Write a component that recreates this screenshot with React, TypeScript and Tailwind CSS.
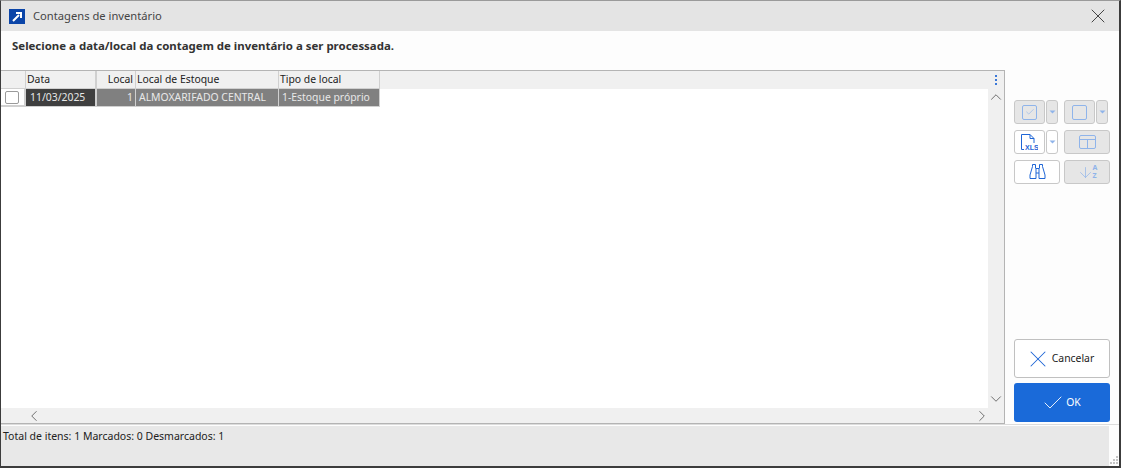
import React from 'react';
import { X, Check, ChevronUp, ChevronDown, ChevronLeft, ChevronRight, ArrowDown } from 'lucide-react';

const Caret = () => (
  <svg width="7" height="4" viewBox="0 0 7 4"><path d="M0.5 0.5h6L3.5 3.5z" fill="#8fb4ea" /></svg>
);

const ToolButton = ({ active, wide, children }: { active?: boolean; wide?: boolean; children?: React.ReactNode }) => (
  <div
    className={`h-[24px] flex items-center justify-center rounded-[3px] border border-[#c8c8c8] ${wide ? 'w-[46px]' : 'w-[31px]'} ${active ? 'bg-white' : 'bg-[#e6e6e6]'}`}
  >
    {children}
  </div>
);

const CaretButton = ({ active }: { active?: boolean }) => (
  <div className={`h-[24px] w-[12px] flex items-center justify-center rounded-[3px] border border-[#c8c8c8] ${active ? 'bg-white' : 'bg-[#e6e6e6]'}`}>
    <Caret />
  </div>
);

export default function App() {
  return (
    <div className="h-[476px] w-[1135px] bg-white font-['Noto_Sans','Liberation_Sans',sans-serif]">
      <div className="flex h-[468px] w-[1121px] flex-col border-t border-r-2 border-b-2 border-l border-t-[#9a9a9a] border-r-[#3c3c3c] border-b-[#3c3c3c] border-l-[#3c3c3c] bg-[#fdfdfd]">
        {/* title bar */}
        <div className="flex h-[30px] shrink-0 items-center bg-[#e4e4e4] pr-[9px] pl-[8px]">
          <div className="flex h-[15px] w-[16px] items-center justify-center bg-[#0b45a8]">
            <svg width="11" height="11" viewBox="0 0 11 11"><path d="M1 10 7 4M4 2h5v5" fill="none" stroke="#fff" strokeWidth="2" /></svg>
          </div>
          <span className="ml-[8px] pt-[1px] text-[11.2px] text-[#444]">Contagens de inventário</span>
          <X className="ml-auto text-[#444]" size={24} strokeWidth={1} />
        </div>

        <p className="mt-[8px] pl-[11px] text-[11.45px] leading-[14px] font-bold whitespace-nowrap text-[#333]">
          Selecione a data/local da contagem de inventário a ser processada.
        </p>

        <div className="mt-[17px] flex min-h-0 flex-1">
          {/* grid */}
          <div className="flex h-[354px] w-[1004px] shrink-0 flex-col border-y border-r border-[#b4b4b4] bg-white">
            <div className="flex h-[18px] shrink-0 bg-[#f0f0f0] text-[10.4px] leading-[16px] whitespace-nowrap text-[#222]">
              <div className="w-[25px] border-r border-b border-[#d0d0d0]" />
              <div className="w-[71px] border-r-2 border-b border-[#d0d0d0] pl-[1px]">Data</div>
              <div className="w-[39px] border-r border-b border-[#d0d0d0] pr-[2px] text-right">Local</div>
              <div className="w-[143px] border-r border-b border-[#d0d0d0] pl-[1px]">Local de Estoque</div>
              <div className="w-[101px] border-r border-b border-[#d0d0d0] pl-[1px]">Tipo de local</div>
              <div className="flex flex-1 items-center justify-end pr-[7px]">
                <svg width="3" height="11" viewBox="0 0 3 11"><path d="M1 0h2v2H1zM1 4h2v2H1zM1 8h2v2H1z" fill="#3b78d8" /></svg>
              </div>
            </div>
            <div className="flex min-h-0 flex-1">
              <div className="flex min-w-0 flex-1 flex-col">
                <div className="flex h-[18px] shrink-0 text-[10.4px] leading-[17px] whitespace-nowrap text-[#e8e8e8]">
                  <div className="flex w-[25px] items-center justify-start border-r-2 border-b-2 border-[#d0d0d0] bg-white pl-[4px]">
                    <div className="h-[13px] w-[14px] rounded-[2px] border border-[#9a9a9a] bg-white" />
                  </div>
                  <div className="w-[71px] border-r-2 border-b border-[#d0d0d0] bg-[#3f3f3f] pl-[4px]">11/03/2025</div>
                  <div className="w-[39px] border-r border-b border-[#d0d0d0] bg-[#808080] pr-[2px] text-right">1</div>
                  <div className="w-[143px] border-r border-b border-[#d0d0d0] bg-[#808080] pl-[3px]">ALMOXARIFADO CENTRAL</div>
                  <div className="w-[101px] border-r border-b border-[#d0d0d0] bg-[#808080] pl-[3px]">1-Estoque próprio</div>
                </div>
                <div className="flex-1" />
              </div>
              <div className="flex w-[16px] shrink-0 flex-col items-center justify-between bg-[#f0f0f0]">
                <ChevronUp size={18} strokeWidth={1.1} className="-mt-[1px] text-[#555]" />
                <ChevronDown size={18} strokeWidth={1.1} className="text-[#555]" />
              </div>
            </div>
            <div className="flex h-[15px] shrink-0 items-center justify-between bg-[#f0f0f0] pr-[13px] pl-[24px]">
              <ChevronLeft size={18} strokeWidth={1.1} className="text-[#555]" />
              <ChevronRight size={18} strokeWidth={1.1} className="text-[#555]" />
            </div>
          </div>

          {/* side tools */}
          <div className="flex flex-1 flex-col pr-[9px] pb-[2px] pl-[9px]">
            <div className="mt-[30px] flex flex-col gap-[6px]">
              <div className="flex gap-[1px]">
                <ToolButton>
                  <div className="flex h-[15px] w-[15px] items-center justify-center rounded-[2px] border border-[#8fb4ea]">
                    <Check size={10} className="text-[#8fb4ea]" strokeWidth={1.5} />
                  </div>
                </ToolButton>
                <CaretButton />
                <div className="w-[4px]" />
                <ToolButton>
                  <div className="h-[15px] w-[15px] rounded-[2px] border border-[#8fb4ea]" />
                </ToolButton>
                <CaretButton />
              </div>
              <div className="flex gap-[1px]">
                <ToolButton active>
                  <svg width="17" height="17" viewBox="0 0 17 17" fill="none">
                    <path d="M9 .5H.5v15H3M9 .5l4 4V9M9 .5v4h4" stroke="#1f66d6" strokeWidth="1" />
                    <text x="4" y="16" fontSize="7" fontWeight="700" fill="#1f66d6" fontFamily="Liberation Sans">XLS</text>
                  </svg>
                </ToolButton>
                <CaretButton active />
                <div className="w-[4px]" />
                <ToolButton wide>
                  <svg width="17" height="14" viewBox="0 0 17 14" fill="none" stroke="#8fb4ea">
                    <rect x="0.5" y="0.5" width="16" height="13" rx="1.5" />
                    <path d="M0.5 4.5h16M8.5 4.5v9" />
                  </svg>
                </ToolButton>
              </div>
              <div className="flex gap-[4px]">
                <ToolButton wide active>
                  <svg width="17" height="16" viewBox="0 0 17 16" fill="none" stroke="#1f66d6">
                    <path d="M3.5 2.5V.5h3v4M13.5 2.5V.5h-3v4M3.5 2.5 1 11v3.5h6V4.5h3v10h6V11l-2.5-8.5M7 9h3" />
                  </svg>
                </ToolButton>
                <ToolButton wide>
                  <div className="flex items-center">
                    <ArrowDown size={17} strokeWidth={1} className="-mr-[1px] text-[#8fb4ea]" />
                    <div className="flex flex-col text-[7px] leading-[8px] font-bold text-[#8fb4ea]">
                      <span>A</span>
                      <span>Z</span>
                    </div>
                  </div>
                </ToolButton>
              </div>
            </div>
            <div className="mt-auto flex flex-col gap-[5px]">
              <div className="flex h-[39px] items-center justify-center rounded-[3px] border border-[#c0c0c0] bg-white pr-[6px] text-[10.4px] text-[#222]">
                <X size={28} strokeWidth={0.9} className="text-[#1f66d6]" />
                <span>Cancelar</span>
              </div>
              <div className="flex h-[39px] items-center justify-center gap-[1px] rounded-[3px] bg-[#1a6ad9] pr-[2px] text-[10.4px] text-white">
                <Check size={24} strokeWidth={0.9} />
                <span>OK</span>
              </div>
            </div>
          </div>
        </div>

        {/* footer */}
        <div className="flex h-[42px] shrink-0 border-t border-[#dcdcdc] pt-[1px]">
          <div className="w-[1108px] bg-[#e8e8e8] pt-[3px] pl-[2px] text-[10.5px] leading-[15px] text-[#222]">
            Total de itens: 1 Marcados: 0 Desmarcados: 1
          </div>
          <div className="flex flex-1 items-end justify-end pr-[1px] pb-[1px]">
            <svg width="9" height="9" viewBox="0 0 9 9"><path d="M7 0h2v2H7zM4 3h2v2H4zM7 3h2v2H7zM1 6h2v2H1zM4 6h2v2H4zM7 6h2v2H7z" fill="#c4c4c4" /></svg>
          </div>
        </div>
      </div>
    </div>
  );
}
